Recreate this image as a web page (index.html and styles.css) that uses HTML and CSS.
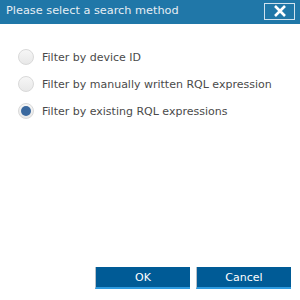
FILE: index.html
```html
<!DOCTYPE html>
<html lang="en">
<head>
  <meta charset="UTF-8" />
  <title>Search method</title>
  <link rel="stylesheet" href="styles.css">
</head>
<body>
  <div class="dialog">
    <div class="title-bar">
      <span class="title">Please select a search method</span>
      <button class="close-btn" type="button" aria-label="Close">
        <svg width="14" height="12" viewBox="0 0 14 12">
          <path d="M2 1 L12 11 M12 1 L2 11" stroke="#fff" stroke-width="2.6" fill="none" />
        </svg>
      </button>
    </div>

    <form class="content">
      <label class="option">
        <input type="radio" name="method" value="device">
        <span class="dot"></span>
        Filter by device ID
      </label>
      <label class="option">
        <input type="radio" name="method" value="manual">
        <span class="dot"></span>
        Filter by manually written RQL expression
      </label>
      <label class="option">
        <input type="radio" name="method" value="existing" checked>
        <span class="dot"></span>
        Filter by existing RQL expressions
      </label>
    </form>

    <div class="actions">
      <button type="button" class="btn">OK</button>
      <button type="button" class="btn">Cancel</button>
    </div>
  </div>
</body>
</html>
```

FILE: styles.css
```css
* {
  box-sizing: border-box;
  margin: 0;
  padding: 0;
}
body {
  background: #fff;
  font-family: 'DejaVu Sans', Verdana, sans-serif;
  width: 300px;
  height: 300px;
  overflow: hidden;
}
.dialog {
  display: flex;
  flex-direction: column;
  height: 300px;
}
.title-bar {
  height: 24px;
  background: #2077a8;
  display: flex;
  align-items: center;
  justify-content: space-between;
  padding: 0 5px 4px 6px;
}
.title {
  color: #e6eef4;
  font-size: 11.3px;
}
.close-btn {
  width: 31px;
  height: 17px;
  background: transparent;
  border: 1px solid #d0e2ee;
  display: flex;
  align-items: center;
  justify-content: center;
  margin-top: 2px;
}
.content {
  flex: 1;
  padding: 25px 0 0 18px;
  display: flex;
  flex-direction: column;
  gap: 11px;
}
.option {
  display: flex;
  align-items: center;
  gap: 8px;
  font-size: 11px;
  color: #4a4a4a;
  height: 16px;
}
.option input {
  display: none;
}
.dot {
  width: 16px;
  height: 16px;
  border-radius: 50%;
  background: linear-gradient(#f6f6f6, #e8e8e8);
  border: 1px solid #d9d9d9;
  display: flex;
  align-items: center;
  justify-content: center;
}
.option input:checked + .dot::after {
  content: "";
  width: 10px;
  height: 10px;
  border-radius: 50%;
  background: #3a689e;
}
.actions {
  display: flex;
  justify-content: flex-end;
  gap: 6px;
  padding: 0 9px 11px 0;
}
.btn {
  width: 95px;
  height: 22px;
  background: #005b96;
  color: #fff;
  border: none;
  border-left: 1px solid #b8c0c8;
  border-bottom: 2px solid #2e9be0;
  font-family: 'DejaVu Sans', Verdana, sans-serif;
  font-size: 11px;
}
```
